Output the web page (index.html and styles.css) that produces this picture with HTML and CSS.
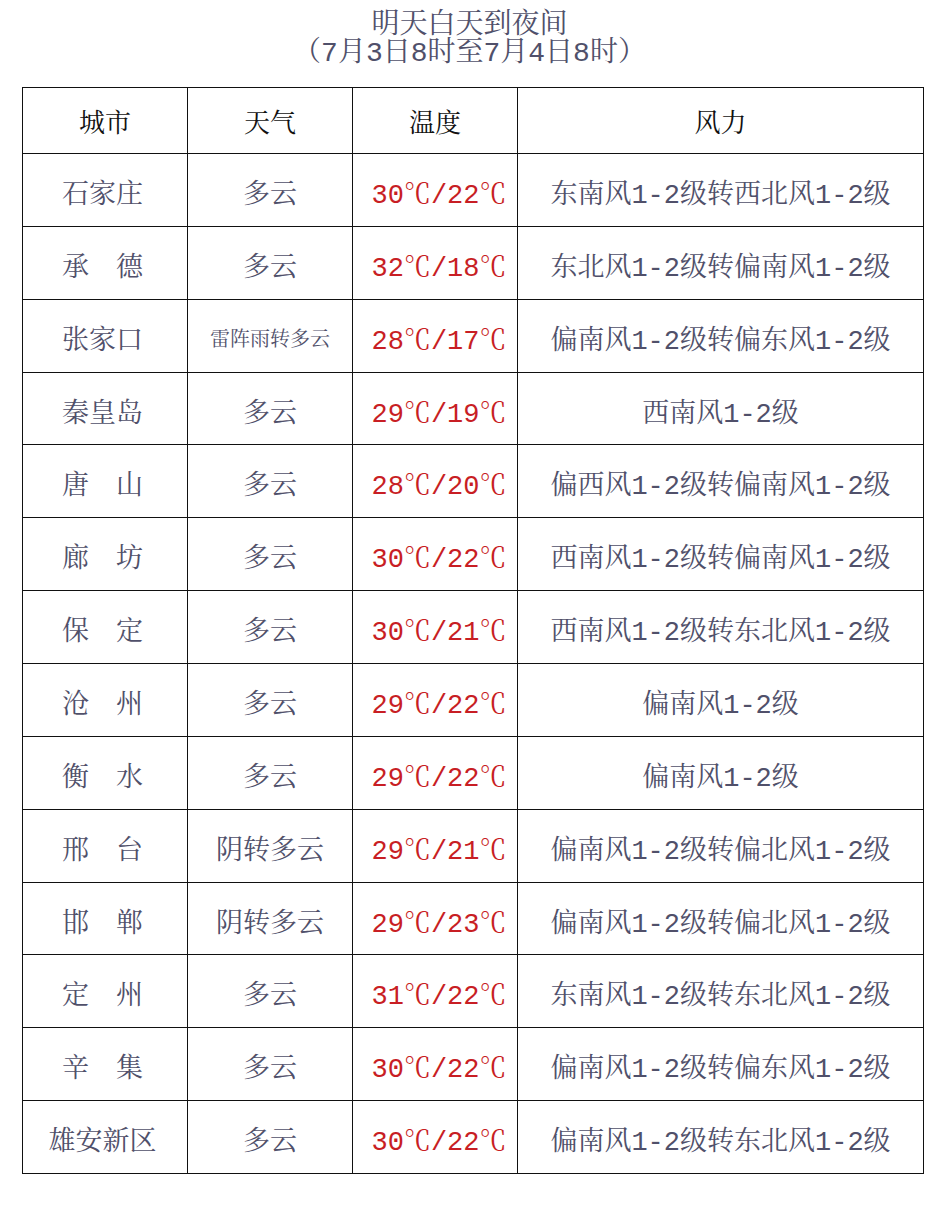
FILE: index.html
```html
<!DOCTYPE html>
<html lang="zh-CN">
<head>
<meta charset="utf-8">
<title>明天白天到夜间</title>
<link rel="stylesheet" href="styles.css">
</head>
<body>
<div class="page">
  <header class="title">
    <div>明天白天到夜间</div>
    <div>（7月3日8时至7月4日8时）</div>
  </header>
  <table class="weather">
    <colgroup>
      <col class="c-city"><col class="c-wx"><col class="c-temp"><col class="c-wind">
    </colgroup>
    <thead>
      <tr><th>城市</th><th>天气</th><th>温度</th><th>风力</th></tr>
    </thead>
    <tbody>
      <tr><td>石家庄</td><td>多云</td><td class="t">30℃/22℃</td><td>东南风1-2级转西北风1-2级</td></tr>
      <tr><td>承　德</td><td>多云</td><td class="t">32℃/18℃</td><td>东北风1-2级转偏南风1-2级</td></tr>
      <tr><td>张家口</td><td class="small">雷阵雨转多云</td><td class="t">28℃/17℃</td><td>偏南风1-2级转偏东风1-2级</td></tr>
      <tr><td>秦皇岛</td><td>多云</td><td class="t">29℃/19℃</td><td>西南风1-2级</td></tr>
      <tr><td>唐　山</td><td>多云</td><td class="t">28℃/20℃</td><td>偏西风1-2级转偏南风1-2级</td></tr>
      <tr><td>廊　坊</td><td>多云</td><td class="t">30℃/22℃</td><td>西南风1-2级转偏南风1-2级</td></tr>
      <tr><td>保　定</td><td>多云</td><td class="t">30℃/21℃</td><td>西南风1-2级转东北风1-2级</td></tr>
      <tr><td>沧　州</td><td>多云</td><td class="t">29℃/22℃</td><td>偏南风1-2级</td></tr>
      <tr><td>衡　水</td><td>多云</td><td class="t">29℃/22℃</td><td>偏南风1-2级</td></tr>
      <tr><td>邢　台</td><td>阴转多云</td><td class="t">29℃/21℃</td><td>偏南风1-2级转偏北风1-2级</td></tr>
      <tr><td>邯　郸</td><td>阴转多云</td><td class="t">29℃/23℃</td><td>偏南风1-2级转偏北风1-2级</td></tr>
      <tr><td>定　州</td><td>多云</td><td class="t">31℃/22℃</td><td>东南风1-2级转东北风1-2级</td></tr>
      <tr><td>辛　集</td><td>多云</td><td class="t">30℃/22℃</td><td>偏南风1-2级转偏东风1-2级</td></tr>
      <tr><td>雄安新区</td><td>多云</td><td class="t">30℃/22℃</td><td>偏南风1-2级转东北风1-2级</td></tr>
    </tbody>
  </table>
</div>
</body>
</html>
```

FILE: styles.css
```css
html, body {
  margin: 0;
  padding: 0;
  background: #ffffff;
}

body {
  font-family: "Liberation Mono", "Noto Serif CJK SC", "Noto Sans CJK SC", monospace;
  color: #50506a;
}

.page {
  width: 901px;
  padding: 12px 0 0 22px;
}

.title {
  text-align: center;
  font-size: 28px;
  line-height: 28px;
  color: #50506a;
  margin-bottom: 19px;
  padding-right: 6px;
}

.weather {
  border-collapse: collapse;
  width: 901px;
  table-layout: fixed;
}

.c-city, .c-wx, .c-temp { width: 165px; }
.c-wind { width: 406px; }

.weather th,
.weather td {
  border: 1px solid #111111;
  text-align: center;
  vertical-align: middle;
  padding: 0;
  white-space: nowrap;
}

.weather th {
  height: 65px;
  font-size: 26px;
  font-weight: normal;
  color: #111111;
}

.weather td {
  height: 68.86px;
  font-size: 27px;
  padding-top: 3px;
}

.weather td:first-child {
  padding-right: 5px;
}

.weather td.small {
  font-size: 20px;
}

.weather td.t {
  color: #c81e24;
  padding-left: 8px;
}
```
